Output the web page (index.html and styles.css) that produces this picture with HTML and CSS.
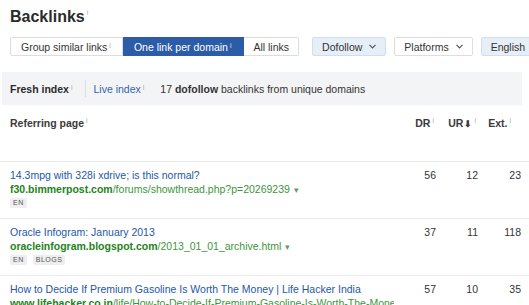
FILE: index.html
```html
<!DOCTYPE html>
<html lang="en">
<head>
    <meta charset="UTF-8">
    <title>Backlinks</title>
    <link rel="stylesheet" href="styles.css">
</head>
<body>
    <div class="page">
        <h1 class="title">Backlinks<sup class="info">i</sup></h1>

        <!-- filters -->
        <div class="toolbar">
            <div class="segmented">
                <button class="seg">Group similar links<sup class="info">i</sup></button>
                <button class="seg seg-active">One link per domain<sup class="info">i</sup></button>
                <button class="seg">All links</button>
            </div>
            <button class="dropdown dropdown-tinted">Dofollow
                <svg class="chevron" width="7" height="5" viewBox="0 0 7 5"><polyline points="0.5,0.8 3.5,3.8 6.5,0.8" /></svg>
            </button>
            <button class="dropdown">Platforms
                <svg class="chevron" width="7" height="5" viewBox="0 0 7 5"><polyline points="0.5,0.8 3.5,3.8 6.5,0.8" /></svg>
            </button>
            <button class="dropdown dropdown-tinted">English
                <svg class="chevron" width="7" height="5" viewBox="0 0 7 5"><polyline points="0.5,0.8 3.5,3.8 6.5,0.8" /></svg>
            </button>
        </div>
    </div>

    <!-- index switch -->
    <div class="index-bar">
        <span class="index-current">Fresh index<sup class="info">i</sup></span>
        <span class="index-sep"></span>
        <a class="index-link" href="#">Live index<sup class="info">i</sup></a>
        <span class="index-summary">17 <b>dofollow</b> backlinks from unique domains</span>
    </div>

    <div class="table">
        <div class="row row-head">
            <div class="cell-page">Referring page<sup class="info">i</sup></div>
            <div class="num">DR<sup class="info">i</sup></div>
            <div class="num">UR<span class="sort">&#11015;</span><sup class="info">i</sup></div>
            <div class="num num-ext">Ext.<sup class="info">i</sup></div>
        </div>

        <div class="row">
            <div class="cell-page">
                <a class="page-title" href="#">14.3mpg with 328i xdrive; is this normal?</a>
                <div class="page-url"><b>f30.bimmerpost.com</b>/forums/showthread.php?p=20269239<span class="caret">&#9662;</span></div>
                <div class="tags"><span class="tag">EN</span></div>
            </div>
            <div class="num">56</div>
            <div class="num">12</div>
            <div class="num">23</div>
        </div>

        <div class="row">
            <div class="cell-page">
                <a class="page-title" href="#">Oracle Infogram: January 2013</a>
                <div class="page-url"><b>oracleinfogram.blogspot.com</b>/2013_01_01_archive.html<span class="caret">&#9662;</span></div>
                <div class="tags"><span class="tag">EN</span><span class="tag">BLOGS</span></div>
            </div>
            <div class="num">37</div>
            <div class="num">11</div>
            <div class="num">118</div>
        </div>

        <div class="row">
            <div class="cell-page">
                <a class="page-title" href="#">How to Decide If Premium Gasoline Is Worth The Money | Life Hacker India</a>
                <div class="page-url"><b>www.lifehacker.co.in</b>/life/How-to-Decide-If-Premium-Gasoline-Is-Worth-The-Money</div>
                <div class="tags"><span class="tag">EN</span></div>
            </div>
            <div class="num">57</div>
            <div class="num">10</div>
            <div class="num">35</div>
        </div>
    </div>
</body>
</html>
```

FILE: styles.css
```css
body {
    margin: 0;
    font-family: "Liberation Sans", Arial, sans-serif;
    font-size: 10.5px;
    color: #333;
    background-color: #fff;
    overflow: hidden;
}

.page {
    padding: 7px 0 0 10px;
}

.title {
    margin: 0;
    font-size: 16px;
    line-height: 20px;
    font-weight: bold;
    color: #2b2b2b;
}

.info {
    font-size: 7px;
    font-weight: normal;
    color: #aaa;
    vertical-align: top;
    line-height: 1;
    margin-left: 2px;
    position: relative;
    top: 1px;
}

.title .info {
    top: 2px;
}

/* filters */
.toolbar {
    display: flex;
    align-items: center;
    margin-top: 10px;
    white-space: nowrap;
}

.segmented {
    display: flex;
    margin-right: 13px;
}

button {
    font-family: inherit;
    font-size: 10.5px;
    color: #333;
    cursor: pointer;
}

.seg {
    height: 19px;
    padding: 0 9px 0 10px;
    background-color: #fff;
    border: 1px solid #ddd;
    border-left: none;
    border-radius: 0;
}

.seg .info {
    margin-right: 2px;
}

.seg:first-child {
    border-left: 1px solid #ddd;
    border-radius: 2px 0 0 2px;
}

.seg:last-child {
    padding: 0 9px;
    border-radius: 0 2px 2px 0;
}

.seg-active {
    padding: 0 10px 0 11px;
    background-color: #2c5ba8;
    border-color: #2c5ba8;
    color: #fff;
}

.seg-active .info {
    color: #dbe4f3;
}

.dropdown {
    display: flex;
    align-items: center;
    gap: 7px;
    height: 19px;
    padding: 0 9px;
    margin-right: 8px;
    background-color: #fff;
    border: 1px solid #ddd;
    border-radius: 2px;
    flex-shrink: 0;
}

.dropdown-tinted {
    background-color: #e6eef8;
    border-color: #d3deec;
}

.chevron polyline {
    fill: none;
    stroke: #555;
    stroke-width: 1.2;
}

/* index switch */
.index-bar {
    display: flex;
    align-items: center;
    height: 33px;
    margin: 16px 7px 0 2px;
    padding-left: 8px;
    background-color: #f3f4f6;
}

.index-current {
    font-weight: bold;
    color: #2b2b2b;
}

.index-sep {
    width: 1px;
    height: 17px;
    background-color: #dcdde0;
    margin: 0 8px 0 12px;
}

.index-link {
    color: #3563b0;
    text-decoration: none;
}

.index-summary {
    margin-left: 16px;
}

/* table */
.row {
    display: grid;
    grid-template-columns: 1fr 42px 42px 43px;
    padding: 6px 8px 10px 10px;
    border-top: 1px solid #e9e9e9;
    line-height: 14px;
}

.row-head {
    border-top: none;
    height: 56px;
    box-sizing: border-box;
    padding-top: 11px;
    font-weight: bold;
    color: #3a3a3a;
}

.row-head .num {
    padding-right: 2px;
}

.row-head .num-ext {
    padding-right: 10px;
}

.cell-page {
    white-space: nowrap;
    overflow: hidden;
}

.num {
    text-align: right;
    white-space: nowrap;
}

.sort {
    font-size: 9px;
    margin-left: 1px;
}

.page-title {
    display: block;
    color: #2458a8;
    text-decoration: none;
}

.page-url {
    color: #3c963c;
}

.page-url b {
    color: #1e8320;
}

.caret {
    color: #6a9a6a;
    font-size: 9px;
    margin-left: 4px;
}

.tags {
    display: flex;
    gap: 6px;
    margin-top: 1px;
}

.tag {
    display: inline-block;
    height: 10px;
    line-height: 10px;
    padding: 0 3px;
    font-size: 7px;
    letter-spacing: 0.5px;
    color: #555;
    background-color: #eeeeee;
    border-radius: 2px;
}
```
